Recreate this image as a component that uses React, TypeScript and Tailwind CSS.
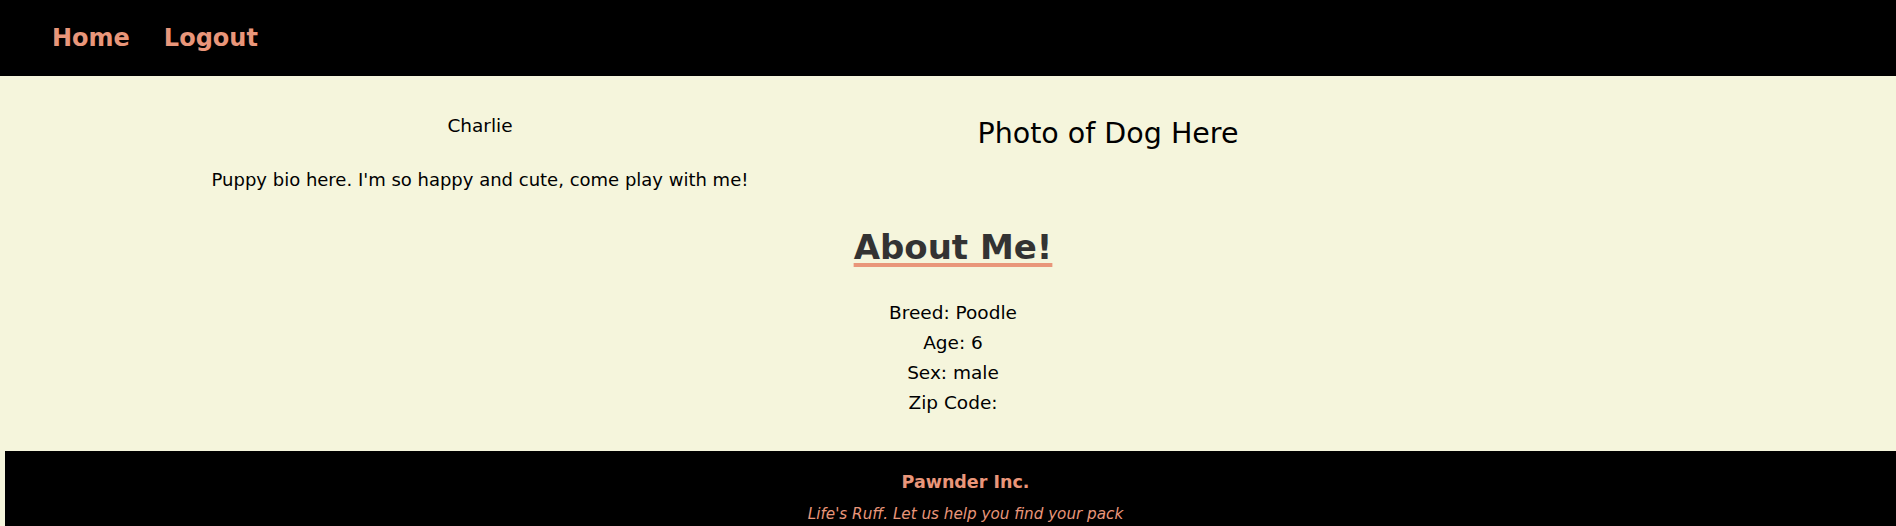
import React from "react";

export default function App() {
  return (
    <div className="min-h-screen bg-[#f5f5dc] font-['Comic_Sans_MS','DejaVu_Sans',sans-serif]">
      {/* Navbar */}
      <nav className="h-[76px] bg-black flex items-center gap-[34px] px-[52px]">
        <a className="text-[24px] font-bold text-[#e9967a] leading-none cursor-pointer">
          Home
        </a>
        <a className="text-[24px] font-bold text-[#e9967a] leading-none cursor-pointer">
          Logout
        </a>
      </nav>

      {/* Profile */}
      <section className="flex items-start">
        <div className="w-[960px] text-center pt-[35px]">
          <p className="text-[18.5px] leading-[30px] text-black">Charlie</p>
          <p className="mt-[24px] text-[18px] leading-[30px] text-black">
            Puppy bio here. I'm so happy and cute, come play with me!
          </p>
        </div>
        <div className="w-[296px] text-center pt-[38px]">
          <h2 className="text-[28.5px] leading-[40px] font-normal text-black">
            Photo of Dog Here
          </h2>
        </div>
      </section>

      {/* About */}
      <section className="text-center mt-[28px] pl-[10px]">
        <h1 className="text-[34px] leading-[48px] font-bold text-[#333333] underline decoration-[#e9967a] decoration-[4px] underline-offset-[4px]">
          About Me!
        </h1>
        <div className="mt-[27px] text-[18.5px] leading-[30px] text-black">
          <p>Breed: Poodle</p>
          <p>Age: 6</p>
          <p>Sex: male</p>
          <p>Zip Code: </p>
        </div>
      </section>

      {/* Footer */}
      <footer className="mt-[33px] ml-[5px] bg-black text-center pt-[19px] pb-[12px] pl-[30px]">
        <p className="text-[17.5px] leading-[24px] font-bold text-[#e9967a]">
          Pawnder Inc.
        </p>
        <p className="mt-[9px] text-[15.2px] leading-[22px] italic text-[#e9967a]">
          Life's Ruff. Let us help you find your pack
        </p>
      </footer>
    </div>
  );
}
